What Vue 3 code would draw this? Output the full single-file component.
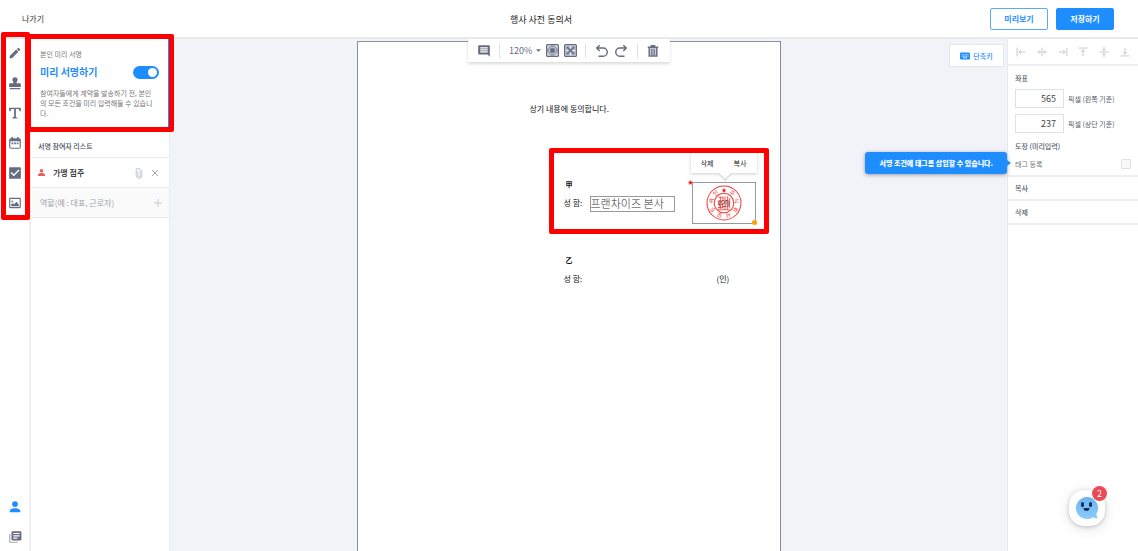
<script setup>
import { ref } from 'vue'

const zoom = ref('120%')
const presign = ref(true)
const posX = ref('565')
const posY = ref('237')
const newRole = ref('')
const tagEnabled = ref(false)

// 24px grid glyphs for the left rail
const tools = [
  { name: '서명', d: 'M3 17.25V21h3.75L17.81 9.94l-3.75-3.75L3 17.25zM20.71 7.04a1 1 0 0 0 0-1.41l-2.34-2.34a1 1 0 0 0-1.41 0l-1.83 1.83 3.75 3.75 1.83-1.83z' },
  { name: '도장', d: 'M12 2a4.500 4.500 0 0 0-4.500 4.500c0 2 2 3.500 2 6H4a2 2 0 0 0-2 2V19h20v-4.500a2 2 0 0 0-2-2h-5.500c0-2.500 2-4 2-6A4.500 4.500 0 0 0 12 2zM3 20.500h18v2H3z' },
  { name: '텍스트', d: 'M2 3h20v6h-2c-.4-3-1.500-4-4-4h-2.500v13c0 1.500.8 2 3 2v1.500h-9V20c2.200 0 3-.5 3-2V5H8C5.500 5 4.400 6 4 9H2z' },
  { name: '날짜', d: 'M19 4h-1V1.500h-2.500V4h-7V1.500H6V4H5a3 3 0 0 0-3 3v12a3 3 0 0 0 3 3h14a3 3 0 0 0 3-3V7a3 3 0 0 0-3-3zm1 16H4V9h16v11zM6 11h3v3H6zm4.500 0h3v3h-3zm4.500 0h3v3h-3z' },
  { name: '체크박스', d: 'M21 2H3a1 1 0 0 0-1 1v18a1 1 0 0 0 1 1h18a1 1 0 0 0 1-1V3a1 1 0 0 0-1-1zM10 17.500l-5.500-5.500 1.700-1.700 3.800 3.800 8-8 1.700 1.700z' },
  { name: '이미지', d: 'M20 3H4a2 2 0 0 0-2 2v14c0 1.100.9 2 2 2h16a2 2 0 0 0 2-2V5a2 2 0 0 0-2-2zm0 16H4V5h16v14zM5.500 17.500v-3l2.500-2 2.500 1.500 4-4 4 4.500v3zM6 8h2.500v2.500H6z' }
]

const aligns = [
  { name: '왼쪽 정렬', d: 'M1.500 1v12M4 7h9M7 4L4 7l3 3' },
  { name: '가로 가운데 정렬', d: 'M7 1v12M0 7h5M3 5l2 2-2 2M14 7H9M11 5L9 7l2 2' },
  { name: '오른쪽 정렬', d: 'M12.500 1v12M10 7H1M7 4l3 3-3 3' },
  { name: '위쪽 정렬', d: 'M1 1.500h12M7 4v9M4 7l3-3 3 3' },
  { name: '세로 가운데 정렬', d: 'M1 7h12M7 0v5M5 3l2 2 2-2M7 14V9M5 11l2-2 2 2' },
  { name: '아래쪽 정렬', d: 'M1 12.500h12M7 10V1M4 7l3 3 3-3' }
]

// characters round the rim of the seal, clockwise from the right of the star
const sealText = ['주', '식', '회', '사', '모', '두', '싸', '인']
</script>

<template>
  <div class="app">
    <header class="topbar">
      <a href="#" class="exit">나가기</a>
      <h1 class="title">행사 사전 동의서</h1>
      <div class="topbar-actions">
        <button type="button" class="btn btn-outline">미리보기</button>
        <button type="button" class="btn btn-primary">저장하기</button>
      </div>
    </header>

    <div class="workspace">
      <nav class="rail">
        <div class="rail-group">
          <button v-for="t in tools" :key="t.name" type="button" class="rail-btn" :aria-label="t.name">
            <svg viewBox="0 0 24 24" width="14" height="14" fill="currentColor" fill-rule="evenodd"><path :d="t.d" /></svg>
          </button>
          <span class="mark mark-rail"></span>
        </div>
        <div class="rail-group">
          <button type="button" class="rail-btn rail-btn--active" aria-label="참여자">
            <svg viewBox="0 0 24 24" width="14" height="14" fill="currentColor"><circle cx="12" cy="7" r="5" /><path d="M3 21v-2c0-3.500 5-5 9-5s9 1.500 9 5v2z" /></svg>
          </button>
          <button type="button" class="rail-btn" aria-label="문서">
            <svg viewBox="0 0 24 24" width="14" height="14" fill="currentColor" fill-rule="evenodd">
              <path d="M4 7H2v13c0 1.100.9 2 2 2h13v-2H4z" opacity=".6" />
              <path d="M21 2H8a2 2 0 0 0-2 2v12c0 1.100.9 2 2 2h13a2 2 0 0 0 2-2V4a2 2 0 0 0-2-2zM9 5h11v2H9zm0 4h11v2H9zm0 4h7v2H9z" />
            </svg>
          </button>
        </div>
      </nav>

      <aside class="sidebar">
        <section class="presign">
          <p class="presign-kicker">본인 미리 서명</p>
          <label class="presign-toggle">
            <span>미리 서명하기</span>
            <input v-model="presign" type="checkbox" class="switch" />
          </label>
          <p class="presign-desc">참여자들에게 계약을 발송하기 전, 본인의 모든 조건을 미리 입력해둘 수 있습니다.</p>
          <span class="mark mark-presign"></span>
        </section>

        <h2 class="list-title">서명 참여자 리스트</h2>
        <div class="signer">
          <svg class="signer-icon" viewBox="0 0 12 12" width="7" height="7" fill="currentColor"><circle cx="6" cy="3" r="3" /><path d="M0 12v-2c0-2 3-3 6-3s6 1 6 3v2z" /></svg>
          <span class="signer-name">가맹 점주</span>
          <button type="button" class="icon-btn icon-btn--light" aria-label="첨부">
            <svg viewBox="0 0 10 14" width="8" height="12" fill="none" stroke="currentColor" stroke-width="1.300"><path d="M8.500 4v6a3.500 3.500 0 0 1-7 0V3.500a2.500 2.500 0 0 1 5 0V10a1.500 1.500 0 0 1-3 0V4.500" /></svg>
          </button>
          <button type="button" class="icon-btn" aria-label="참여자 삭제">
            <svg viewBox="0 0 8 8" width="8" height="8" fill="none" stroke="currentColor"><path d="M1 1l6 6M7 1L1 7" /></svg>
          </button>
        </div>
        <div class="signer signer--new">
          <input v-model="newRole" class="role-input" type="text" placeholder="역할(예 : 대표, 근로자)" aria-label="역할" />
          <button type="button" class="icon-btn icon-btn--add" aria-label="참여자 추가">
            <svg viewBox="0 0 8 8" width="8" height="8" fill="none" stroke="currentColor"><path d="M4 0v8M0 4h8" /></svg>
          </button>
        </div>
      </aside>

      <main class="canvas">
        <div class="stage">
          <article class="page">
            <p class="line consent">상기 내용에 동의합니다.</p>
            <p class="line party party-a">甲</p>
            <p class="line name-a">성 함:</p>
            <p class="line party party-b">乙</p>
            <p class="line name-b">성 함:</p>
            <p class="line seal-b">(인)</p>

            <div class="field field-text">프랜차이즈 본사</div>
            <div class="field field-stamp">
              <svg class="seal" viewBox="0 0 70 70" width="36" height="36">
                <g fill="none" stroke="#f23c3c">
                  <circle cx="35" cy="35" r="33" stroke-width="2" />
                  <circle cx="35" cy="35" r="19" stroke-width="2" />
                </g>
                <path d="M35 6l1.300 2.700 3 .4-2.200 2.100.5 3-2.600-1.500-2.600 1.500.5-3-2.200-2.100 3-.4z" fill="#f01414" />
                <text
                  v-for="(ch, i) in sealText"
                  :key="i"
                  class="seal-char"
                  x="35"
                  y="14"
                  :transform="`rotate(${(i + 1) * 40} 35 35)`"
                >{{ ch }}</text>
                <path d="M24 24h9v7h-9v7h10M23 44h11M37 22v25M37 30h5M42 22v25M46 25v19M23 48h23M28 25v21" fill="none" stroke="#f55" stroke-width="2" />
                <text class="seal-mark" x="35" y="40">(인)</text>
              </svg>
              <span class="required">★</span>
              <span class="handle"></span>
            </div>
            <div class="field-menu">
              <button type="button">삭제</button>
              <button type="button">복사</button>
              <svg class="field-menu-tip" viewBox="0 0 14 8" width="14" height="8"><path d="M0 0h14L7 7z" fill="#fff" /><path d="M0 0l7 7 7-7" fill="none" stroke="#dcdcdc" stroke-width="1.500" /></svg>
            </div>
            <span class="mark mark-fields"></span>
          </article>

          <div class="toolbar">
            <button type="button" aria-label="메모">
              <svg viewBox="0 0 24 24" width="14" height="14" fill="currentColor" fill-rule="evenodd"><path d="M22 22l-4-4H4a2 2 0 0 1-2-2V4c0-1.100.9-2 2-2h16c1.100 0 2 .9 2 2zM5.500 5.500v2h13v-2zm0 3.500v2h13V9zm0 3.500v2h13v-2z" /></svg>
            </button>
            <span class="divider"></span>
            <span class="zoom">
              <select v-model="zoom" aria-label="확대 비율">
                <option>100%</option>
                <option>120%</option>
                <option>150%</option>
              </select>
              <svg viewBox="0 0 6 3" width="5" height="3" fill="currentColor"><path d="M0 0h6L3 3z" /></svg>
            </span>
            <button type="button" aria-label="너비에 맞춤">
              <svg viewBox="0 0 24 24" width="13" height="13">
                <rect x="1" y="1" width="22" height="22" rx="2" fill="#9aa0b1" stroke="currentColor" stroke-width="2" />
                <rect x="7" y="7" width="10" height="10" rx="2" fill="currentColor" stroke="#d5d8e0" stroke-width="1.500" />
                <path d="M3.500 8V3.500H8M16 3.500h4.500V8M20.500 16v4.500H16M8 20.500H3.500V16" fill="none" stroke="#fff" stroke-width="1.500" />
              </svg>
            </button>
            <button type="button" aria-label="화면에 맞춤">
              <svg viewBox="0 0 24 24" width="13" height="13">
                <rect x="1" y="1" width="22" height="22" rx="2" fill="#b4b9c6" stroke="currentColor" stroke-width="2" />
                <path d="M5 9V5h4zM15 5h4v4zM19 15v4h-4zM9 19H5v-4z" fill="currentColor" />
                <path d="M6 6l12 12M18 6L6 18" stroke="currentColor" stroke-width="2.500" />
                <path d="M12 3v5M12 16v5M3 12h5M16 12h5" stroke="#e8eaf0" stroke-width="2" />
              </svg>
            </button>
            <span class="divider"></span>
            <button type="button" aria-label="실행 취소">
              <svg viewBox="0 0 24 24" width="14" height="14" fill="none" stroke="currentColor" stroke-width="2.500"><path d="M8 2L3 7l5 5M3 7h11a6.500 6.500 0 0 1 0 14H6" /></svg>
            </button>
            <button type="button" aria-label="다시 실행">
              <svg viewBox="0 0 24 24" width="14" height="14" fill="none" stroke="currentColor" stroke-width="2.500"><path d="M16 2l5 5-5 5M21 7H10a6.500 6.500 0 0 0 0 14h8" /></svg>
            </button>
            <span class="divider"></span>
            <button type="button" aria-label="삭제">
              <svg viewBox="0 0 24 24" width="14" height="14" fill="none" stroke="currentColor"><path d="M3 5.500h18M8 3h8" stroke-width="2.500" /><path d="M5.500 7v13.500h13V7" fill="#c9ccd6" stroke-width="2.500" /><path d="M10 8v11M14 8v11" stroke-width="2" /></svg>
            </button>
          </div>
        </div>

        <button type="button" class="shortcut">
          <svg viewBox="0 0 20 14" width="10" height="8"><rect width="20" height="14" rx="2" fill="currentColor" /><path d="M3 4.500h14M3 7.500h14" stroke="#fff" stroke-width="1.500" stroke-dasharray="2 1" /><path d="M6 10.500h8" stroke="#fff" stroke-width="1.500" /></svg>
          단축키
        </button>
        <div class="tooltip" role="tooltip">서명 조건에 태그를 삽입할 수 있습니다.</div>
      </main>

      <aside class="props">
        <div class="align-row">
          <button v-for="a in aligns" :key="a.name" type="button" :aria-label="a.name">
            <svg viewBox="0 0 14 14" width="10" height="10" fill="none" stroke="currentColor" stroke-width="1.300"><path :d="a.d" /></svg>
          </button>
        </div>
        <section class="props-body">
          <div class="props-group">
            <h3>좌표</h3>
            <label class="coord"><input v-model="posX" type="text" />픽셀 (왼쪽 기준)</label>
            <label class="coord"><input v-model="posY" type="text" />픽셀 (상단 기준)</label>
          </div>
          <h3>도장 (미리입력)</h3>
          <label class="tag-row">태그 등록<input v-model="tagEnabled" type="checkbox" /></label>
        </section>
        <button type="button" class="props-action">복사</button>
        <button type="button" class="props-action">삭제</button>
      </aside>
    </div>

    <button type="button" class="chat" aria-label="채팅 상담">
      <svg viewBox="0 0 24 24" width="24" height="24">
        <defs>
          <linearGradient id="bubble" x1="0" y1="0" x2="0" y2="1">
            <stop offset="0" stop-color="#6db4f0" />
            <stop offset="1" stop-color="#8accfa" />
          </linearGradient>
        </defs>
        <path d="M12 1a11 11 0 1 0 6 20.200c1.600 1 3.500 1.300 5 1-1-1-1.500-2.500-1.600-4.500A11 11 0 0 0 12 1z" fill="url(#bubble)" />
        <rect x="6" y="6" width="3" height="5" rx="1.500" fill="#12305c" />
        <rect x="14" y="6" width="3" height="5" rx="1.500" fill="#12305c" />
        <path d="M8.500 12h6a3 3 0 0 1-6 0z" fill="#12305c" />
      </svg>
      <span class="chat-badge">2</span>
    </button>
  </div>
</template>

<style>
body {
  margin: 0;
  overflow: hidden;
}
</style>

<style scoped>
.app {
  --blue: #1e8dff;
  --slate: #656d82;
  --line: #e9eaef;
  display: flex;
  flex-direction: column;
  height: 100vh;
  color: #333;
  background: #fff;
  font-family: "Noto Sans CJK KR", "Noto Sans", sans-serif;
  font-size: 7px;
  line-height: 10px;
}

.app *,
.app *::before,
.app *::after {
  box-sizing: border-box;
}

h1,
h2,
h3,
p {
  margin: 0;
  font-size: 7px;
  font-weight: 400;
}

button,
input,
select {
  margin: 0;
  padding: 0;
  border: 0;
  background: none;
  color: inherit;
  font: inherit;
}

button {
  cursor: pointer;
}

svg {
  display: block;
  flex-shrink: 0;
}

.topbar {
  display: grid;
  grid-template-columns: 1fr auto 1fr;
  align-items: center;
  height: 39px;
  flex-shrink: 0;
  padding: 0 24px 0 22px;
  border-bottom: 2px solid #e8e9eb;
}

.exit {
  color: #333;
  font-size: 8px;
  text-decoration: none;
}

.title {
  padding: 3px 54px 0 0;
  color: #222;
  font-size: 9px;
}

.topbar-actions {
  display: flex;
  justify-content: flex-end;
  gap: 8px;
}

.btn {
  width: 58px;
  height: 22px;
  border: 1px solid #57aaff;
  border-radius: 2px;
  color: var(--blue);
  font-size: 8px;
  font-weight: 700;
}

.btn-primary {
  border-color: var(--blue);
  background: var(--blue);
  color: #fff;
}

.workspace {
  display: flex;
  flex: 1;
  min-height: 0;
}

.rail {
  display: flex;
  flex-direction: column;
  justify-content: space-between;
  width: 31px;
  flex-shrink: 0;
  border-right: 2px solid #efeff3;
}

.rail-group {
  position: relative;
  display: flex;
  flex-direction: column;
  gap: 2px;
}

.rail-btn {
  display: grid;
  place-items: center;
  height: 28px;
  color: var(--slate);
}

.rail-btn--active {
  color: var(--blue);
}

/* Red guide frames drawn over the editor */
.mark {
  position: absolute;
  z-index: 5;
  border: 5px solid #f00;
  border-radius: 2px;
  pointer-events: none;
}

.mark-rail {
  inset: -7px -1px -3px 1px;
}

.mark-presign {
  inset: -5px -6px -4px -5px;
}

.mark-fields {
  top: 106px;
  left: 191px;
  width: 220px;
  height: 86px;
}

.sidebar {
  width: 139px;
  flex-shrink: 0;
  border-right: 1px solid var(--line);
}

.presign {
  position: relative;
  height: 90px;
  padding: 10px 9px 0;
  border-right: 1px solid var(--blue);
  border-bottom: 1px solid var(--blue);
}

.presign-kicker {
  color: #777;
}

.presign-toggle {
  display: flex;
  align-items: center;
  justify-content: space-between;
  margin: 6px 0 9px;
  color: var(--blue);
  font-size: 10px;
  font-weight: 700;
  line-height: 14px;
}

.switch {
  display: flex;
  justify-content: flex-end;
  width: 26px;
  height: 13px;
  padding: 2px;
  border-radius: 7px;
  background: #c4c8d2;
  appearance: none;
}

.switch::before {
  content: "";
  width: 9px;
  height: 9px;
  border-radius: 50%;
  background: #fff;
}

.switch:not(:checked) {
  justify-content: flex-start;
}

.switch:checked {
  background: var(--blue);
}

.presign-desc {
  padding-right: 4px;
  color: #777;
  word-break: break-all;
}

.list-title {
  padding: 12px 7px 6px;
  border-bottom: 1px solid var(--line);
  color: #444b5c;
  font-weight: 500;
}

.signer {
  display: flex;
  align-items: center;
  gap: 8px;
  height: 30px;
  padding: 0 10px 0 7px;
  border-bottom: 1px solid var(--line);
}

.signer--new {
  padding: 0 7px 0 9px;
  background: #fafafb;
}

.signer-icon {
  color: #f25a5a;
}

.signer-name {
  flex: 1;
  color: #222;
  font-size: 8px;
  font-weight: 500;
}

.icon-btn {
  color: #a5a9b4;
}

.icon-btn--light,
.icon-btn--add {
  color: #c5cad6;
}

.role-input {
  flex: 1;
  min-width: 0;
  font-size: 8px;
}

.role-input::placeholder {
  color: #a0a4ae;
}

.canvas {
  position: relative;
  flex: 1;
  min-width: 0;
  background: #f2f3f9;
}

.stage {
  position: relative;
  height: 100%;
  margin-right: 40px;
  padding-top: 2px;
}

.page {
  position: relative;
  width: 424px;
  max-width: 100%;
  height: 100%;
  margin: 0 auto;
  border: 1px solid #8c8e94;
  border-bottom: 0;
  background: #fff;
}

.line {
  position: absolute;
  color: #111;
  font-size: 8px;
  line-height: 12px;
}

.consent {
  top: 61px;
  left: 172px;
}

.party {
  left: 208px;
  font-size: 7px;
  font-weight: 700;
}

.party-a {
  top: 136px;
}

.party-b {
  top: 212px;
}

.name-a {
  top: 155px;
  left: 206px;
}

.name-b {
  top: 231px;
  left: 206px;
}

.seal-b {
  top: 231px;
  left: 359px;
}

.field {
  position: absolute;
  border: 1px solid #999;
}

.field-text {
  top: 154px;
  left: 232px;
  width: 85px;
  height: 16px;
  color: #333;
  font-size: 11px;
  font-weight: 300;
  line-height: 13px;
  white-space: nowrap;
}

.field-stamp {
  display: grid;
  place-items: center;
  top: 140px;
  left: 334px;
  width: 64px;
  height: 42px;
}

.seal-char {
  fill: #ef2b2b;
  font-size: 11px;
  text-anchor: middle;
}

.seal-mark {
  fill: #222;
  font-size: 14px;
  text-anchor: middle;
}

.required {
  position: absolute;
  top: -6px;
  left: -5px;
  color: #f01414;
  font-size: 6px;
}

.handle {
  position: absolute;
  right: -2px;
  bottom: -2px;
  width: 5px;
  height: 5px;
  border-radius: 50%;
  background: #ffa200;
}

.field-menu {
  position: absolute;
  top: 111px;
  left: 333px;
  display: flex;
  width: 66px;
  height: 20px;
  background: #fff;
  box-shadow: 0 1px 3px rgba(0, 0, 0, 0.2);
}

.field-menu button {
  flex: 1;
  color: #222;
}

.field-menu-tip {
  position: absolute;
  top: 100%;
  left: 27px;
}

.toolbar {
  position: absolute;
  top: 0;
  left: 50%;
  display: flex;
  align-items: center;
  justify-content: space-between;
  width: 202px;
  height: 23px;
  padding: 0 9px;
  background: #fff;
  box-shadow: 0 2px 3px rgba(0, 0, 0, 0.14);
  color: var(--slate);
  transform: translateX(-50%);
}

.divider {
  width: 1px;
  height: 14px;
  margin: 0 4px;
  background: #dddfe5;
}

.zoom {
  display: flex;
  align-items: center;
  gap: 3px;
}

.zoom select {
  width: 24px;
  appearance: none;
  font-size: 9px;
  line-height: 14px;
}

.shortcut {
  position: absolute;
  top: 5px;
  right: 3px;
  display: flex;
  align-items: center;
  justify-content: center;
  gap: 3px;
  width: 55px;
  height: 23px;
  border: 1px solid #e4e6ee;
  background: #fff;
  color: var(--blue);
  font-weight: 500;
}

.tooltip {
  position: absolute;
  top: 113px;
  right: 0;
  z-index: 4;
  padding: 6px 14px;
  border-radius: 3px;
  background: var(--blue);
  box-shadow: 0 1px 4px rgba(0, 0, 0, 0.35);
  color: #fff;
  font-weight: 900;
  white-space: nowrap;
}

.tooltip::after {
  content: "";
  position: absolute;
  top: 8px;
  left: 100%;
  border: 3px solid transparent;
  border-left: 4px solid var(--blue);
  border-right: 0;
}

.props {
  width: 131px;
  flex-shrink: 0;
  border-left: 1px solid var(--line);
  color: #555b69;
}

.props h3 {
  font-weight: 500;
}

.align-row {
  display: flex;
  justify-content: space-between;
  height: 27px;
  padding: 0 8px;
  border-bottom: 2px solid #efeff3;
  color: #c3c5cb;
}

.props-body {
  display: flex;
  flex-direction: column;
  gap: 8px;
  padding: 7px 7px 6px;
  border-bottom: 2px solid #efeff3;
}

.props-group {
  display: flex;
  flex-direction: column;
  gap: 6px;
}

.coord {
  display: flex;
  align-items: center;
  gap: 4px;
}

.coord input {
  width: 49px;
  height: 19px;
  padding: 0 7px;
  border: 1px solid #dfe1ea;
  color: #444;
  font-size: 9px;
  text-align: right;
}

.tag-row {
  display: flex;
  align-items: center;
  justify-content: space-between;
  color: #777;
}

.tag-row input {
  width: 10px;
  height: 10px;
  border: 1px solid #dfe1e6;
  border-radius: 1px;
  background: #f8f8fa;
  appearance: none;
}

.tag-row input:checked {
  background: var(--blue);
}

.props-action {
  display: block;
  width: 100%;
  height: 24px;
  padding: 0 7px;
  border-bottom: 2px solid #efeff3;
  font-weight: 500;
  text-align: left;
}

.chat {
  position: fixed;
  right: 33px;
  bottom: 25px;
  display: grid;
  place-items: center;
  width: 36px;
  height: 36px;
  border-radius: 15px;
  background: #fff;
  box-shadow: 0 1px 4px rgba(0, 0, 0, 0.2), 0 2px 14px rgba(0, 0, 0, 0.12);
}

.chat-badge {
  position: absolute;
  top: -4px;
  right: -2px;
  width: 15px;
  height: 15px;
  border-radius: 50%;
  background: #ea4a55;
  color: #fff;
  font-size: 9px;
  line-height: 15px;
}
</style>
